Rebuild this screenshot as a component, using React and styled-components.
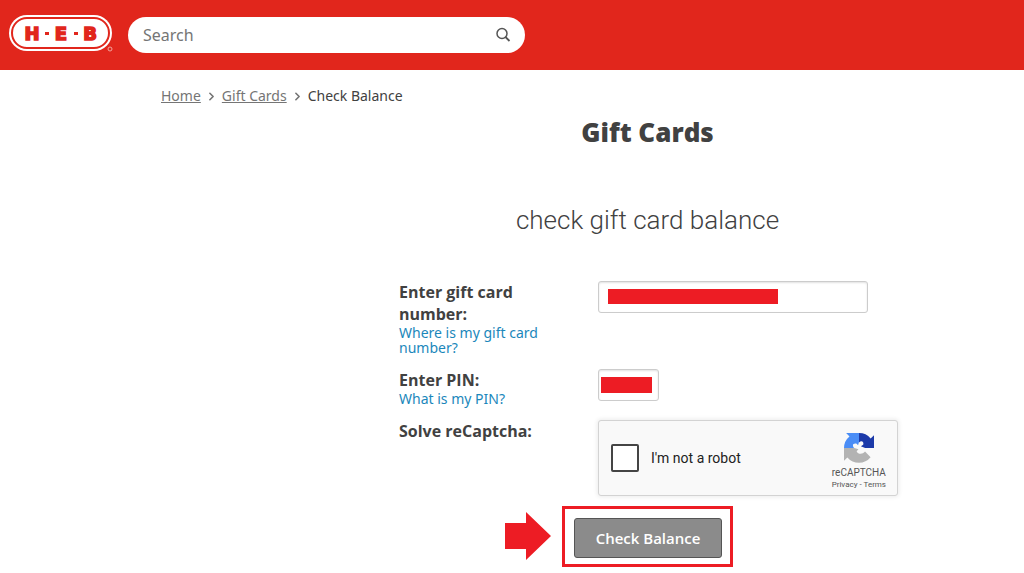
import React, { useState } from 'react'
import styled, { createGlobalStyle } from 'styled-components'
import { FiChevronRight } from 'react-icons/fi'

export default function App() {
  const [robot, setRobot] = useState(false)

  return (
    <>
      <GlobalStyle />
      <Header>
        <LogoLink href='#' aria-label='H-E-B home'>
          <Logo />
        </LogoLink>
        <SearchForm role='search' onSubmit={(e) => e.preventDefault()}>
          <SearchInput type='search' placeholder='Search' aria-label='Search' />
          <SearchButton type='submit' aria-label='Submit search'>
            <SearchIcon />
          </SearchButton>
        </SearchForm>
      </Header>

      <Breadcrumb aria-label='Breadcrumb'>
        <a href='#home'>Home</a>
        <FiChevronRight size={13} strokeWidth={3} />
        <a href='#gift-cards'>Gift Cards</a>
        <FiChevronRight size={13} strokeWidth={3} />
        <span>Check Balance</span>
      </Breadcrumb>

      <Main>
        <Title>Gift Cards</Title>
        <Subtitle>check gift card balance</Subtitle>
        <form onSubmit={(e) => e.preventDefault()}>
          <Fields>
            <Field>
              <div>
                <Label htmlFor='card'>Enter gift card number:</Label>
                <HelpLink href='#where'>
                  Where is my gift card number?
                </HelpLink>
              </div>
              <InputBox $width='270px'>
                <TextInput id='card' type='text' />
                <Redaction $inset='8px 90px 9px 10px' />
              </InputBox>
            </Field>
            <Field>
              <div>
                <Label htmlFor='pin'>Enter PIN:</Label>
                <HelpLink href='#pin-help'>What is my PIN?</HelpLink>
              </div>
              <InputBox $width='61px'>
                <TextInput id='pin' type='text' />
                <Redaction $inset='8px 7px 8px 3px' />
              </InputBox>
            </Field>
            <Field>
              <Label htmlFor='robot'>Solve reCaptcha:</Label>
              <Captcha>
                <CaptchaLabel>
                  <Checkbox
                    id='robot'
                    type='checkbox'
                    checked={robot}
                    onChange={(e) => setRobot(e.target.checked)}
                  />
                  I'm not a robot
                </CaptchaLabel>
                <CaptchaBrand>
                  <CaptchaLogo />
                  <span>reCAPTCHA</span>
                  <CaptchaTerms>
                    <a href='#privacy'>Privacy</a> - <a href='#terms'>Terms</a>
                  </CaptchaTerms>
                </CaptchaBrand>
              </Captcha>
            </Field>
          </Fields>
          <Highlight>
            <Arrow viewBox='0 0 46 48' aria-hidden='true'>
              <path d='M0 11h21V0l25 24-25 24V37H0z' fill='#ed1c24' />
            </Arrow>
            <SubmitButton type='submit'>Check Balance</SubmitButton>
          </Highlight>
        </form>
      </Main>
    </>
  )
}

function Logo() {
  return (
    <svg width='104' height='37' viewBox='0 0 104 37' aria-hidden='true'>
      <rect width='103' height='36' rx='18' fill='#fff' />
      <rect
        x='3'
        y='3'
        width='97'
        height='30'
        rx='15'
        fill='#fff'
        stroke='#e1261c'
        strokeWidth='2'
      />
      <g
        fill='#e1261c'
        stroke='#e1261c'
        strokeWidth='1.6'
        fontFamily='"DejaVu Sans", sans-serif'
        fontWeight='700'
        fontSize='18'
        textAnchor='middle'
      >
        <text x='23' y='24.5'>H</text>
        <text x='52' y='24.5'>E</text>
        <text x='81' y='24.5'>B</text>
      </g>
      <rect x='36' y='17' width='4' height='3' fill='#e1261c' />
      <rect x='65' y='17' width='4' height='3' fill='#e1261c' />
      <circle cx='101' cy='34' r='2' fill='#e1261c' stroke='#f3a29d' />
    </svg>
  )
}

function SearchIcon() {
  return (
    <svg
      width='16'
      height='16'
      viewBox='0 0 16 16'
      fill='none'
      stroke='currentColor'
      strokeWidth='1.5'
    >
      <circle cx='7' cy='6.5' r='5' />
      <path d='M10.5 10l4 4' strokeWidth='1.8' />
    </svg>
  )
}

function CaptchaLogo() {
  return (
    <svg width='30' height='30' viewBox='0 0 64 64' aria-hidden='true'>
      <path
        d='M64 32V4.6l-7.2 7.2A31.9 31.9 0 0 0 32 .1v20c5-5 11-2 9 5l-5 3 9 4z'
        fill='#1c3aa9'
      />
      <path
        d='M32 .03H4.5l7.2 7.2A31.9 31.9 0 0 0 0 32h22c-6-6-2-11 5-9l3 3 2-7z'
        fill='#4a8df6'
      />
      <path
        d='M0 32v27.4l7.2-7.2a31.9 31.9 0 0 0 49.5-.6L44.9 39.7c-6 7-15 6-18-1l4-4-9-2.7z'
        fill='#b3b3b3'
      />
    </svg>
  )
}

const GlobalStyle = createGlobalStyle`
  * {
    box-sizing: border-box;
  }
  body {
    margin: 0;
    background: #fff;
    color: #414141;
    font-family: 'Open Sans', sans-serif;
  }
`

const Header = styled.header`
  display: flex;
  align-items: center;
  gap: 15px;
  height: 70px;
  padding: 0 9px;
  background: #e1261c;
`

const LogoLink = styled.a`
  display: flex;
  padding-bottom: 3px;
`

const SearchForm = styled.form`
  display: flex;
  align-items: center;
  flex: 0 1 397px;
  height: 36px;
  padding: 0 14px 0 15px;
  border-radius: 18px;
  background: #fff;
`

const SearchInput = styled.input`
  flex: 1;
  min-width: 0;
  padding: 0;
  border: 0;
  outline: 0;
  background: transparent;
  color: #414141;
  font: 16px 'Noto Sans', sans-serif;
  &::placeholder {
    color: #757575;
  }
`

const SearchButton = styled.button`
  display: flex;
  padding: 0;
  border: 0;
  background: none;
  color: #555;
  cursor: pointer;
`

const Breadcrumb = styled.nav`
  display: flex;
  align-items: center;
  gap: 4px;
  padding: 16px 161px 0;
  font-family: 'Noto Sans', sans-serif;
  font-size: 14px;
  line-height: 20px;
  a,
  svg {
    color: #757575;
  }
`

const Main = styled.main`
  padding: 0 128px 0 399px;
`

const Title = styled.h1`
  margin: 8px 0 0;
  font-size: 26px;
  font-weight: 800;
  line-height: 36px;
  text-align: center;
`

const Subtitle = styled.h2`
  margin: 51px 0 42px;
  font-family: Roboto, sans-serif;
  font-size: 26px;
  font-weight: 300;
  line-height: 38px;
  text-align: center;
`

const Fields = styled.div`
  display: grid;
  gap: 14px;
`

const Field = styled.div`
  display: grid;
  grid-template-columns: 154px 1fr;
  column-gap: 45px;
  align-items: start;
`

const Label = styled.label`
  display: block;
  font-size: 16px;
  font-weight: 700;
  line-height: 22px;
`

const HelpLink = styled.a`
  display: block;
  color: #1b87bb;
  font-family: 'Noto Sans', sans-serif;
  font-size: 14px;
  line-height: 15px;
  text-decoration: none;
`

const InputBox = styled.div`
  position: relative;
  width: ${(props) => props.$width};
`

const TextInput = styled.input`
  display: block;
  width: 100%;
  height: 32px;
  padding: 0 8px;
  border: 1px solid #ccc;
  border-radius: 3px;
  box-shadow: inset 0 1px 2px rgba(0, 0, 0, 0.12);
  font: 14px 'Open Sans', sans-serif;
`

const Redaction = styled.span`
  position: absolute;
  inset: ${(props) => props.$inset};
  background: #ed1c24;
`

const Captcha = styled.div`
  display: flex;
  align-items: center;
  justify-content: space-between;
  width: 300px;
  height: 76px;
  padding: 0 11px 0 12px;
  border: 1px solid #d3d3d3;
  border-radius: 3px;
  background: #f9f9f9;
  box-shadow: 0 0 4px 1px rgba(0, 0, 0, 0.08);
  font-family: Roboto, sans-serif;
`

const CaptchaLabel = styled.label`
  display: flex;
  align-items: center;
  gap: 12px;
  color: #222;
  font-size: 14px;
`

const Checkbox = styled.input`
  appearance: none;
  width: 28px;
  height: 28px;
  margin: 0;
  border: 2px solid #444;
  border-radius: 2px;
  background: #fff;
  &:checked {
    background: #4285f4;
  }
`

const CaptchaBrand = styled.div`
  display: flex;
  flex-direction: column;
  align-items: center;
  padding-top: 8px;
  color: #555;
  font-size: 10px;
  line-height: 12px;
  svg {
    margin-bottom: 4px;
  }
`

const CaptchaTerms = styled.div`
  font-size: 8px;
  a {
    color: inherit;
    text-decoration: none;
  }
`

const Highlight = styled.div`
  position: relative;
  width: fit-content;
  margin: 10px auto 0;
  padding: 9px 8px 6px 9px;
  border: 3px solid #ed1c24;
`

const Arrow = styled.svg`
  position: absolute;
  top: 3px;
  right: calc(100% + 14px);
  width: 46px;
  height: 48px;
`

const SubmitButton = styled.button`
  display: block;
  height: 40px;
  padding: 0 21px;
  border: 1px solid #555;
  border-radius: 3px;
  background: #8b8b8b;
  color: #fff;
  font: 600 15px 'Open Sans', sans-serif;
  cursor: pointer;
`
